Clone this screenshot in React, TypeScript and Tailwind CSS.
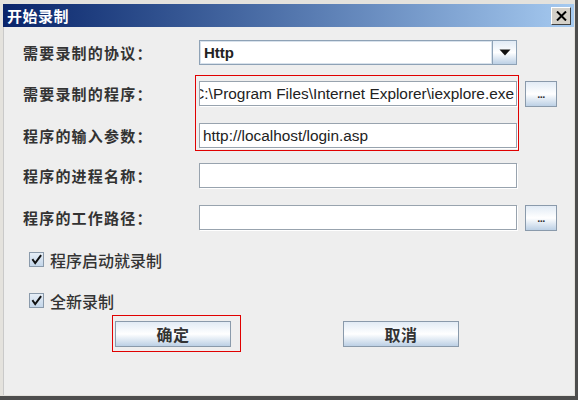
import React from "react";

const cjk = { fontFamily: '"Noto Sans CJK SC", "Noto Sans", sans-serif' };
const latin = { fontFamily: '"Liberation Sans", Arial, "Noto Sans CJK SC", sans-serif' };

function Label({ text }: { text: string }) {
  return (
    <div
      className="w-[176px] shrink-0 text-[15px] font-bold text-[#333333] tracking-[1.2px] leading-none"
      style={cjk}
    >
      {text}
    </div>
  );
}

function Field({ value, right }: { value?: string; right?: boolean }) {
  return (
    <div
      className={
        "w-[318px] h-[25px] shrink-0 bg-white border border-[#98a3ae] shadow-[1px_1px_0_#ffffff] flex items-center overflow-hidden " +
        (right ? "justify-end pr-[2px]" : "pl-[3px]")
      }
    >
      {value ? (
        <span className="text-[15.4px] text-[#222] whitespace-nowrap leading-none" style={latin}>
          {value}
        </span>
      ) : null}
    </div>
  );
}

function DotsButton() {
  return (
    <div className="ml-[8px] w-[32px] h-[26px] shrink-0 border border-[#8a9aab] bg-gradient-to-b from-[#e2ebf5] via-[#ffffff] to-[#bcd0e5] flex items-end justify-center pb-[6px]">
      <span className="text-[11px] font-bold text-[#333] leading-none tracking-[-0.5px]" style={latin}>
        ...
      </span>
    </div>
  );
}

function Check({ label }: { label: string }) {
  return (
    <div className="h-[25px] flex items-center pl-[6px]">
      <div className="w-[15px] h-[15px] border border-[#8a9aab] bg-gradient-to-b from-[#e6eef7] to-[#c4d6e9] flex items-center justify-center">
        <svg width="11" height="11" viewBox="0 0 11 11">
          <path d="M2 6 L4.2 9 L9.5 2" stroke="#111" strokeWidth="2" fill="none" strokeLinecap="square" />
        </svg>
      </div>
      <span className="ml-[6px] text-[16px] text-[#333] leading-none font-medium" style={cjk}>
        {label}
      </span>
    </div>
  );
}

function BigButton({ text }: { text: string }) {
  return (
    <div className="w-[116px] h-[26px] border border-[#8a9aab] bg-gradient-to-b from-[#e2ebf5] via-[#ffffff] to-[#bcd0e5] flex items-center justify-center">
      <span className="text-[16px] font-bold text-[#333] leading-none tracking-[0.5px]" style={cjk}>
        {text}
      </span>
    </div>
  );
}

export default function App() {
  return (
    <div className="w-[578px] h-[400px] bg-[#e4e2dd] border-r-[3px] border-b-[4px] border-[#4d4d4d] relative overflow-hidden">
      <div className="w-full h-full pl-[3px] pt-[4px] pr-[1px] pb-[1px] flex flex-col">
        {/* Title bar */}
        <div className="h-[23px] shrink-0 bg-gradient-to-r from-[#0a246a] to-[#a6caf0] flex items-center justify-between pl-[4px] pr-[3px]">
          <span className="text-white text-[15px] font-bold leading-none tracking-[0.5px]" style={cjk}>
            开始录制
          </span>
          <div className="w-[20px] h-[18px] bg-[#d4d0c8] border-t border-l border-t-white border-l-white border-r border-b border-r-[#404040] border-b-[#404040] flex items-center justify-center">
            <svg width="11" height="10" viewBox="0 0 11 10">
              <path d="M1 0.5 L10 9.5 M10 0.5 L1 9.5" stroke="#000" strokeWidth="2" />
            </svg>
          </div>
        </div>
        {/* Body */}
        <div className="flex-1 bg-[#eeeeee] border-l border-[#c9c9c9] pl-[19px] pt-[13px]">
          {/* Row 1 */}
          <div className="flex items-center h-[25px]">
            <Label text="需要录制的协议：" />
            <div className="w-[318px] h-[25px] border border-[#8ea2b6] bg-white flex">
              <div className="flex-1 flex items-center pl-[3px] border border-[#d8e2ec]">
                <span className="text-[15px] font-bold text-[#222] leading-none" style={latin}>
                  Http
                </span>
              </div>
              <div className="w-[24px] border-l border-[#8ea2b6] bg-gradient-to-b from-[#e2ebf5] via-[#ffffff] to-[#bcd0e5] flex items-center justify-center">
                <svg width="12" height="7" viewBox="0 0 12 7">
                  <path d="M0.5 0.5 L11.5 0.5 L6 6.5 Z" fill="#111" />
                </svg>
              </div>
            </div>
          </div>
          {/* Row 2 */}
          <div className="flex items-center h-[25px] mt-[16px]">
            <Label text="需要录制的程序：" />
            <Field value="C:\Program Files\Internet Explorer\iexplore.exe" right />
            <DotsButton />
          </div>
          {/* Row 3 */}
          <div className="flex items-center h-[25px] mt-[17px]">
            <Label text="程序的输入参数：" />
            <Field value="http://localhost/login.asp" />
          </div>
          {/* Row 4 */}
          <div className="flex items-center h-[25px] mt-[15px]">
            <Label text="程序的进程名称：" />
            <Field />
          </div>
          {/* Row 5 */}
          <div className="flex items-center h-[25px] mt-[17px]">
            <Label text="程序的工作路径：" />
            <Field />
            <DotsButton />
          </div>
          <div className="mt-[17px]">
            <Check label="程序启动就录制" />
          </div>
          <div className="mt-[16px]">
            <Check label="全新录制" />
          </div>
          <div className="flex mt-[8px] pl-[92px]">
            <BigButton text="确定" />
            <div className="ml-[112px]">
              <BigButton text="取消" />
            </div>
          </div>
        </div>
      </div>
      {/* Red annotation rectangles */}
      <div className="absolute left-[195px] top-[75px] w-[324px] h-[76px] border border-[#e00000] pointer-events-none" />
      <div className="absolute left-[112px] top-[315px] w-[129px] h-[37px] border border-[#e00000] pointer-events-none" />
    </div>
  );
}
